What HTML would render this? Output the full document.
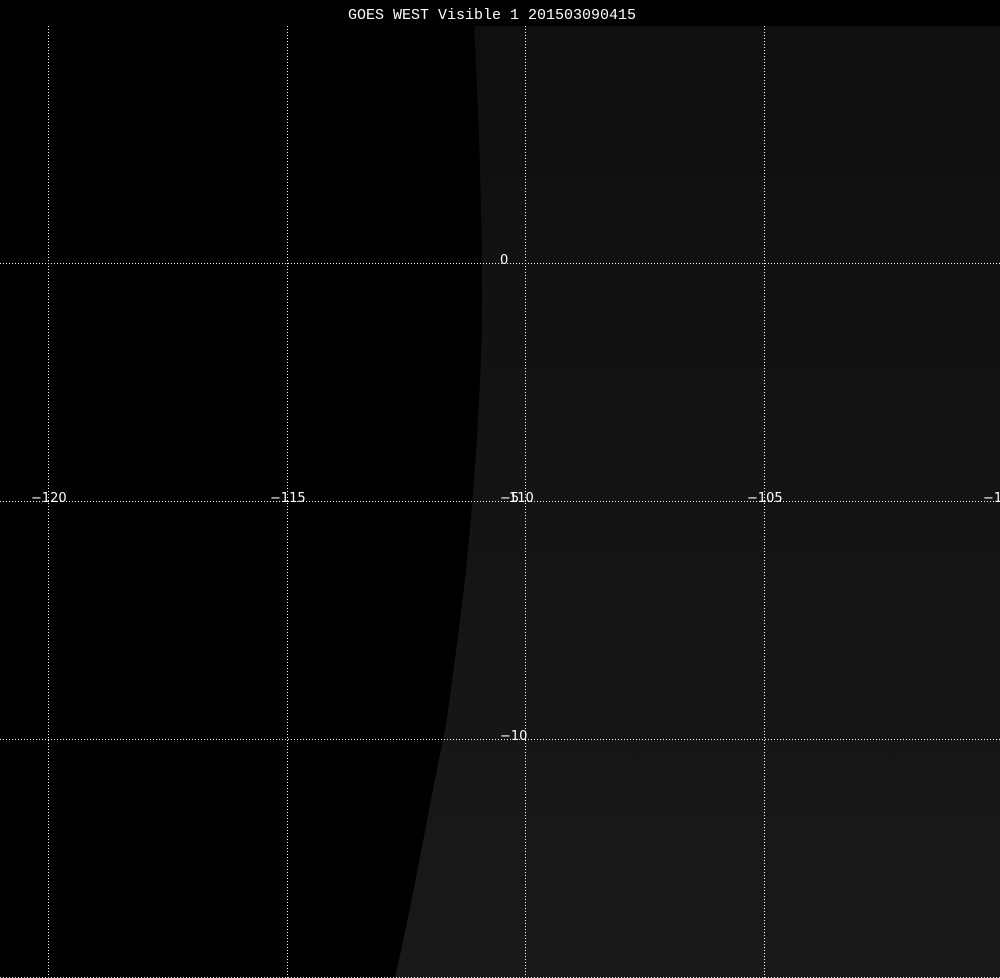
<!DOCTYPE html>
<html><head><style>
html,body{margin:0;padding:0;background:#000;width:1000px;height:978px;overflow:hidden}
svg{display:block}
text{font-family:"DejaVu Sans","Liberation Sans",sans-serif;fill:#fff;font-size:13px}
</style></head><body>
<svg width="1000" height="978" viewBox="0 0 1000 978" xmlns="http://www.w3.org/2000/svg">
<defs>
<linearGradient id="g" x1="0" y1="0" x2="0" y2="1">
<stop offset="0" stop-color="#0f0f0f"/>
<stop offset="1" stop-color="#191919"/>
</linearGradient>
</defs>
<rect width="1000" height="978" fill="#000"/>
<path d="M474 26 L1000 26 L1000 978 L395 978 C415 890 430 800 446 726 C455 660 463 600 467 560 C475 480 482 380 482 300 C482 200 478 100 474 26 Z" fill="url(#g)"/>
<text x="492" y="19" text-anchor="middle" style="font-family:'Liberation Mono',monospace;font-size:15px">GOES WEST Visible 1 201503090415</text>
<g stroke="#fff" stroke-width="1" stroke-dasharray="1 2">
<line x1="48.5" y1="26" x2="48.5" y2="978"/>
<line x1="287.5" y1="26" x2="287.5" y2="978"/>
<line x1="525.5" y1="26" x2="525.5" y2="978"/>
<line x1="764.5" y1="26" x2="764.5" y2="978"/>
<line x1="0" y1="263.5" x2="1000" y2="263.5"/>
<line x1="0" y1="501.5" x2="1000" y2="501.5"/>
<line x1="0" y1="739.5" x2="1000" y2="739.5"/>
<line x1="0" y1="977.5" x2="1000" y2="977.5"/>
</g>
<text x="500" y="264">0</text>
<text x="31" y="502">−120</text>
<text x="270" y="502">−115</text>
<text x="500" y="502">−5</text><text x="509" y="502">110</text>
<text x="747" y="502">−105</text>
<text x="983" y="502">−1</text>
<text x="500" y="740">−10</text>
</svg>
</body></html>
